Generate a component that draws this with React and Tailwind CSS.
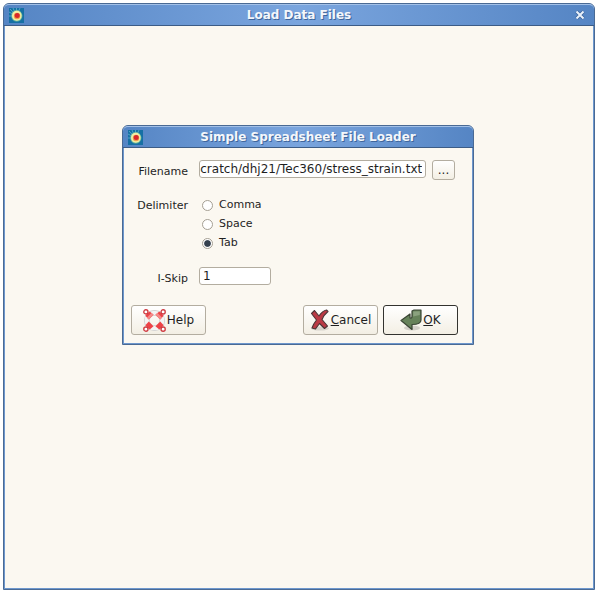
import { useState, useEffect, useRef } from 'react';

const delimiters = ['Comma', 'Space', 'Tab'];

const buttonBase =
  'flex items-center justify-center rounded-[3px] border bg-linear-to-b from-white to-[#f3efe4] text-[12px]';

function AppIcon() {
  return (
    <svg width="15" height="15" viewBox="0 0 15 15" aria-hidden="true">
      <rect width="15" height="15" fill="#1670a4" />
      <g stroke="#5fb4cc" strokeWidth="0.8">
        <path d="M7.5 8 L1 1 M7.5 8 L4 0 M7.5 8 L7.5 0 M7.5 8 L11 0 M7.5 8 L0 4 M7.5 8 L0 8" />
      </g>
      <ellipse cx="7.8" cy="7.8" rx="5.6" ry="5.8" fill="#6dbb9e" />
      <ellipse cx="7.8" cy="7.8" rx="4.8" ry="5" fill="#f3eda6" />
      <circle cx="8" cy="8" r="3.2" fill="#f0a04a" />
      <circle cx="8.2" cy="7.6" r="2.5" fill="#d8272c" />
    </svg>
  );
}

function HelpIcon() {
  return (
    <svg width="23" height="23" viewBox="0 0 24 24" aria-hidden="true">
      <circle cx="12" cy="12" r="8" fill="none" stroke="#cbcbcb" strokeWidth="6" />
      <circle cx="12" cy="12" r="8" fill="none" stroke="#f4f4f4" strokeWidth="4.6" />
      <g fill="#ee4247">
        <path d="M2.500 7 L7 2.500 L11 6 L6 11 Z" />
        <path d="M17 2.500 L21.500 7 L18 11 L13 6 Z" />
        <path d="M6 13 L11 18 L7 21.500 L2.500 17 Z" />
        <path d="M18 13 L21.500 17 L17 21.500 L13 18 Z" />
      </g>
      <g fill="#f58a89">
        <path d="M9 4 L11 6 L6 11 L4 9 Z" />
        <path d="M15 4 L20 9 L18 11 L13 6 Z" />
      </g>
      <g fill="#fff" stroke="#cf3a40" strokeWidth="1.4">
        <circle cx="3" cy="3" r="2.2" />
        <circle cx="21" cy="3" r="2.2" />
        <circle cx="3" cy="21" r="2.2" />
        <circle cx="21" cy="21" r="2.2" />
      </g>
    </svg>
  );
}

function CancelIcon() {
  return (
    <svg width="20" height="22" viewBox="0 0 20 22" aria-hidden="true">
      <ellipse cx="10" cy="19.5" rx="9" ry="2" fill="#000" opacity="0.12" />
      <path
        d="M1.5 4.5 L4.5 1.5 L9 7 C11 4 13.5 1.5 16.5 1 L18 2.5 C15 5 13 7.5 12 10.5 L17.5 17 L14.5 19.5 L9.5 14.5 C8 16.5 6.5 18.5 5.5 20 L2 19 C3 16 4.5 13.5 6.5 11 Z"
        fill="#bb3a45"
        stroke="#4a3436"
        strokeWidth="1.1"
        strokeLinejoin="round"
      />
    </svg>
  );
}

function OkIcon() {
  return (
    <svg width="22" height="22" viewBox="0 0 22 22" aria-hidden="true">
      <ellipse cx="12" cy="19" rx="8" ry="2.5" fill="#000" opacity="0.14" />
      <path
        d="M12 2 L14 1 L21 1 L21 11 C21 14 18 15.5 12 15.5 L12 20.5 L1 11.5 L10 5 L10 9 C11.5 9.5 12 9 12 7 Z"
        fill="#66825a"
        stroke="#3a4535"
        strokeWidth="1.2"
        strokeLinejoin="round"
      />
      <path d="M13.2 2.6 L19.8 2.2 L19.8 6 L13.2 7.5 Z" fill="#8ba27f" />
    </svg>
  );
}

function TitleBar({ title, onClose }) {
  return (
    <header className="flex h-[22px] items-center rounded-t-[5px] border-t border-b border-t-[#a3c1e8] border-b-[#3c5c86] bg-linear-to-r from-[#5585c4] via-[#7aa5de] to-[#5585c4] pl-[5px]">
      <AppIcon />
      <h1 className="flex-1 text-center text-[12px] font-bold text-[#f4f7fb] [text-shadow:1px_1px_0_#3f669c]">
        {title}
      </h1>
      {onClose && (
        <button type="button" aria-label="Close" onClick={onClose} className="mr-2 flex w-3 justify-center">
          <svg width="10" height="10" viewBox="0 0 10 10" aria-hidden="true">
            <path d="M1.5 1.5 L8.5 8.5 M8.5 1.5 L1.5 8.5" stroke="#3f669c" strokeWidth="3.5" />
            <path d="M1.5 1.5 L8.5 8.5 M8.5 1.5 L1.5 8.5" stroke="#e9f1fb" strokeWidth="2" />
          </svg>
        </button>
      )}
    </header>
  );
}

function FileLoader() {
  const [filename, setFilename] = useState('scratch/dhj21/Tec360/stress_strain.txt');
  const [delimiter, setDelimiter] = useState('Tab');
  const [skip, setSkip] = useState('1');
  const fileRef = useRef(null);

  // keep the end of a long path in view
  useEffect(() => {
    fileRef.current.scrollLeft = fileRef.current.scrollWidth;
  }, []);

  return (
    <section className="w-full max-w-[352px] rounded-t-md border border-[#4a6a94] bg-[#6d97cd]">
      <TitleBar title="Simple Spreadsheet File Loader" />
      <form className="mx-px mb-px bg-[#fbf8f1] pt-3 pr-[14px] pb-2 pl-[7px]" onSubmit={e => e.preventDefault()}>
        <div className="grid grid-cols-[57px_1fr] items-start gap-x-[11px]">
          <label htmlFor="filename" className="pt-1 text-right leading-4">Filename</label>
          <div className="flex gap-[6px] pr-[3px]">
            <input
              id="filename"
              ref={fileRef}
              value={filename}
              onChange={e => setFilename(e.target.value)}
              className="h-[18px] min-w-0 flex-1 rounded-[3px] border border-[#b3ada0] bg-white pr-[3px] text-[12px] leading-4 outline-none"
            />
            <button type="button" aria-label="Browse" className={`${buttonBase} h-5 w-[23px] border-[#b3ada0]`}>
              ...
            </button>
          </div>

          <span id="delimiter" className="mt-4 text-right leading-[19px]">Delimiter</span>
          <div role="radiogroup" aria-labelledby="delimiter" className="mt-4 pl-[3px]">
            {delimiters.map(name => (
              <label key={name} className="flex h-[19px] items-center gap-[6px]">
                <input
                  type="radio"
                  name="delimiter"
                  checked={delimiter === name}
                  onChange={() => setDelimiter(name)}
                  className="size-[11px] appearance-none rounded-full border border-[#a59f93] bg-white checked:bg-radial checked:from-[#34404e] checked:from-45% checked:to-white checked:to-60%"
                />
                {name}
              </label>
            ))}
          </div>

          <label htmlFor="skip" className="mt-[18px] text-right leading-4">I-Skip</label>
          <input
            id="skip"
            value={skip}
            onChange={e => setSkip(e.target.value)}
            className="mt-[14px] h-[18px] w-[72px] rounded-[3px] border border-[#b3ada0] bg-white px-[3px] text-[12px] leading-4 outline-none"
          />
        </div>

        <div className="mt-[18px] flex gap-[5px]">
          <button type="button" className={`${buttonBase} h-[30px] w-[75px] gap-px border-[#b3ada0]`}>
            <HelpIcon />
            Help
          </button>
          <button type="button" className={`${buttonBase} ml-auto h-[30px] w-[75px] gap-px border-[#b3ada0]`}>
            <CancelIcon />
            <span><u>C</u>ancel</span>
          </button>
          <button type="submit" className={`${buttonBase} h-[30px] w-[75px] gap-px border-[#33332f]`}>
            <OkIcon />
            <span><u>O</u>K</span>
          </button>
        </div>
      </form>
    </section>
  );
}

export default function App() {
  const [open, setOpen] = useState(true);

  return (
    <div className="flex min-h-screen bg-white pt-[3px] pr-[5px] pb-[9px] pl-[3px] font-['DejaVu_Sans',sans-serif] text-[11px] text-[#1f1f1f]">
      {open && (
        <main className="flex flex-1 flex-col rounded-t-md border border-[#4a6a94] bg-[#6d97cd]">
          <TitleBar title="Load Data Files" onClose={() => setOpen(false)} />
          <div className="mx-px mb-px flex flex-1 flex-col items-center bg-[#fbf8f1] pt-[99px] pr-[18px] pb-8 pl-4">
            <FileLoader />
          </div>
        </main>
      )}
    </div>
  );
}
